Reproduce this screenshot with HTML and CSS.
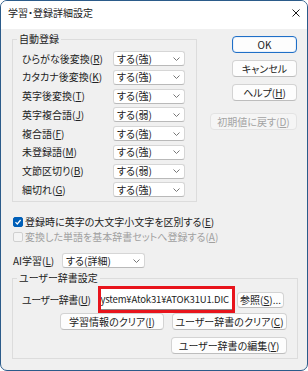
FILE: index.html
```html
<!DOCTYPE html>
<html lang="ja">
<head>
<meta charset="utf-8">
<title>学習・登録詳細設定</title>
<link rel="stylesheet" href="styles.css">
</head>
<body>
<div class="window">
  <div class="titlebar">
    <span class="title">学習・登録詳細設定</span>
    <svg class="close" width="8" height="8" viewBox="0 0 8 8"><path d="M0.5 0.5L7.5 7.5M7.5 0.5L0.5 7.5" stroke="#1a1a1a" stroke-width="1"/></svg>
  </div>
  <div class="content">
    <div class="top">
      <fieldset class="group auto">
        <legend>自動登録</legend>
        <div class="rows">
          <span class="lbl">ひらがな後変換(<u>R</u>)</span>
          <div class="combo"><span>する(強)</span><svg width="7" height="4" viewBox="0 0 7 4"><path d="M0.5 0.5L3.5 3.5L6.5 0.5" fill="none" stroke="#777"/></svg></div>
          <span class="lbl">カタカナ後変換(<u>K</u>)</span>
          <div class="combo"><span>する(強)</span><svg width="7" height="4" viewBox="0 0 7 4"><path d="M0.5 0.5L3.5 3.5L6.5 0.5" fill="none" stroke="#777"/></svg></div>
          <span class="lbl">英字後変換(<u>T</u>)</span>
          <div class="combo"><span>する(強)</span><svg width="7" height="4" viewBox="0 0 7 4"><path d="M0.5 0.5L3.5 3.5L6.5 0.5" fill="none" stroke="#777"/></svg></div>
          <span class="lbl">英字複合語(<u>J</u>)</span>
          <div class="combo"><span>する(弱)</span><svg width="7" height="4" viewBox="0 0 7 4"><path d="M0.5 0.5L3.5 3.5L6.5 0.5" fill="none" stroke="#777"/></svg></div>
          <span class="lbl">複合語(<u>F</u>)</span>
          <div class="combo"><span>する(強)</span><svg width="7" height="4" viewBox="0 0 7 4"><path d="M0.5 0.5L3.5 3.5L6.5 0.5" fill="none" stroke="#777"/></svg></div>
          <span class="lbl">未登録語(<u>M</u>)</span>
          <div class="combo"><span>する(強)</span><svg width="7" height="4" viewBox="0 0 7 4"><path d="M0.5 0.5L3.5 3.5L6.5 0.5" fill="none" stroke="#777"/></svg></div>
          <span class="lbl">文節区切り(<u>B</u>)</span>
          <div class="combo"><span>する(弱)</span><svg width="7" height="4" viewBox="0 0 7 4"><path d="M0.5 0.5L3.5 3.5L6.5 0.5" fill="none" stroke="#777"/></svg></div>
          <span class="lbl">細切れ(<u>G</u>)</span>
          <div class="combo"><span>する(強)</span><svg width="7" height="4" viewBox="0 0 7 4"><path d="M0.5 0.5L3.5 3.5L6.5 0.5" fill="none" stroke="#777"/></svg></div>
        </div>
      </fieldset>
      <div class="side">
        <div class="btn ok">OK</div>
        <div class="btn w65">キャンセル</div>
        <div class="btn w65">ヘルプ(<u>H</u>)</div>
        <div class="btn disabled reset">初期値に戻す(<u>D</u>)</div>
      </div>
    </div>

    <div class="checks">
      <div class="check"><span class="box on"><svg width="8" height="8" viewBox="0 0 8 8"><path d="M1.5 4.2L3.3 6L6.6 2" fill="none" stroke="#fff" stroke-width="1.2"/></svg></span><span>登録時に英字の大文字小文字を区別する(<u>E</u>)</span></div>
      <div class="check off"><span class="box"></span><span>変換した単語を基本辞書セットへ登録する(<u>A</u>)</span></div>
    </div>

    <div class="ai">
      <span class="ailbl">AI学習(<u>L</u>)</span>
      <div class="combo wide"><span>する(詳細)</span><svg width="7" height="4" viewBox="0 0 7 4"><path d="M0.5 0.5L3.5 3.5L6.5 0.5" fill="none" stroke="#777"/></svg></div>
    </div>

    <fieldset class="group user">
      <legend>ユーザー辞書設定</legend>
      <div class="dictrow">
        <span class="dictlbl">ユーザー辞書(<u>U</u>)</span>
        <div class="mark"><div class="field"><span>System¥Atok31¥ATOK31U1.DIC</span></div></div>
        <div class="btn browse">参照(<u>S</u>)...</div>
      </div>
      <div class="btnrow">
        <div class="btn w104">学習情報のクリア(<u>I</u>)</div>
        <div class="btn w115">ユーザー辞書のクリア(<u>C</u>)</div>
      </div>
      <div class="btnrow second">
        <div class="btn w116">ユーザー辞書の編集(<u>Y</u>)</div>
      </div>
    </fieldset>
  </div>
</div>
</body>
</html>
```
FILE: styles.css
```css
* { box-sizing: border-box; }
html, body { margin: 0; padding: 0; background: #ffffff; }
body {
  font-family: "Noto Sans CJK JP", "Noto Sans", sans-serif;
  font-size: 10px;
  line-height: 14px;
  color: #222222;
  font-feature-settings: "palt";
}
u { text-decoration-thickness: 1px; text-underline-offset: 1px; }

.window {
  width: 308px;
  height: 371px;
  border: 1px solid #2b5b8a;
  border-radius: 7px;
  overflow: hidden;
  background: #f0f0f0;
}

.titlebar {
  height: 28px;
  display: flex;
  justify-content: space-between;
  align-items: flex-start;
  padding: 5px 7px 0 7px;
  background: #ffffff;
}
.close { margin-top: 3px; }

.content { padding: 3px 10px 0 11px; }

.top { display: flex; justify-content: space-between; }

.group {
  margin: 0;
  border: 1px solid #dcdcdc;
  min-width: 0;
}
.group legend {
  padding: 0 2px;
  margin-left: -5px;
  line-height: 14px;
}
.auto { width: 185px; padding: 5px 11px 4px 9px; }

.rows {
  display: grid;
  grid-template-columns: 91px 72px;
  grid-auto-rows: 15px;
  row-gap: 3.75px;
  align-items: center;
}
.lbl { white-space: nowrap; }

.combo {
  height: 15px;
  display: flex;
  align-items: center;
  justify-content: space-between;
  padding: 0 4px 0 3px;
  background: #ffffff;
  border: 1px solid #d6d6d6;
  border-bottom-color: #b9b9b9;
  border-radius: 3px;
  white-space: nowrap;
}
.combo.wide { width: 83px; }

.side {
  display: flex;
  flex-direction: column;
  align-items: flex-end;
  gap: 7px;
  padding-top: 4px;
}

.btn {
  height: 17px;
  display: flex;
  align-items: center;
  justify-content: center;
  background: #fdfdfd;
  border: 1px solid #d3d3d3;
  border-bottom-color: #bdbdbd;
  border-radius: 4px;
  white-space: nowrap;
}
.btn.ok { width: 65px; border: 1px solid #1f6fc7; box-shadow: inset 0 0 0 1px #e9f1fb; }
.w65 { width: 65px; }
.btn.reset { width: 87px; margin-top: 5px; }
.btn.disabled {
  background: #f5f5f5;
  border-color: #e3e3e3;
  color: #a3a3a3;
}

.checks { margin-top: 12px; padding-left: 1px; }
.check {
  height: 15px;
  display: flex;
  align-items: center;
  gap: 2px;
  white-space: nowrap;
}
.box {
  width: 10px;
  height: 10px;
  border-radius: 2px;
  border: 1px solid #bcbcbc;
  background: #f6f6f6;
  display: flex;
  align-items: center;
  justify-content: center;
  flex: none;
}
.box.on { background: #005fb8; border-color: #005fb8; }
.check.off { color: #a0a0a0; }
.check.off .box { border-color: #d0d0d0; background: #f4f4f4; }

.ai {
  margin-top: 9px;
  height: 15px;
  display: flex;
  align-items: center;
  padding-left: 1px;
}
.ailbl { width: 49px; white-space: nowrap; }

.user { width: 286px; margin-top: 3px; padding: 1px 10px 4px 9px; }

.dictrow { height: 27px; display: flex; align-items: center; }
.dictlbl { width: 76px; white-space: nowrap; letter-spacing: -0.5px; }
.mark {
  width: 137px;
  height: 27px;
  border: 3px solid #e8141c;
  background: #ffffff;
}
.field {
  height: 100%;
  display: flex;
  align-items: center;
  justify-content: flex-end;
  overflow: hidden;
  white-space: nowrap;
  padding-right: 3px;
  border-bottom: 1px solid #8a8a8a;
  font-feature-settings: normal;
  font-size: 9.5px;
  letter-spacing: -0.15px;
}
.btn.browse { width: 47px; height: 16px; margin-left: 2px; }

.btnrow { display: flex; justify-content: flex-end; gap: 8px; }
.btnrow.second { margin-top: 7px; }
.w104 { width: 104px; }
.w115 { width: 115px; }
.w116 { width: 116px; }
```
